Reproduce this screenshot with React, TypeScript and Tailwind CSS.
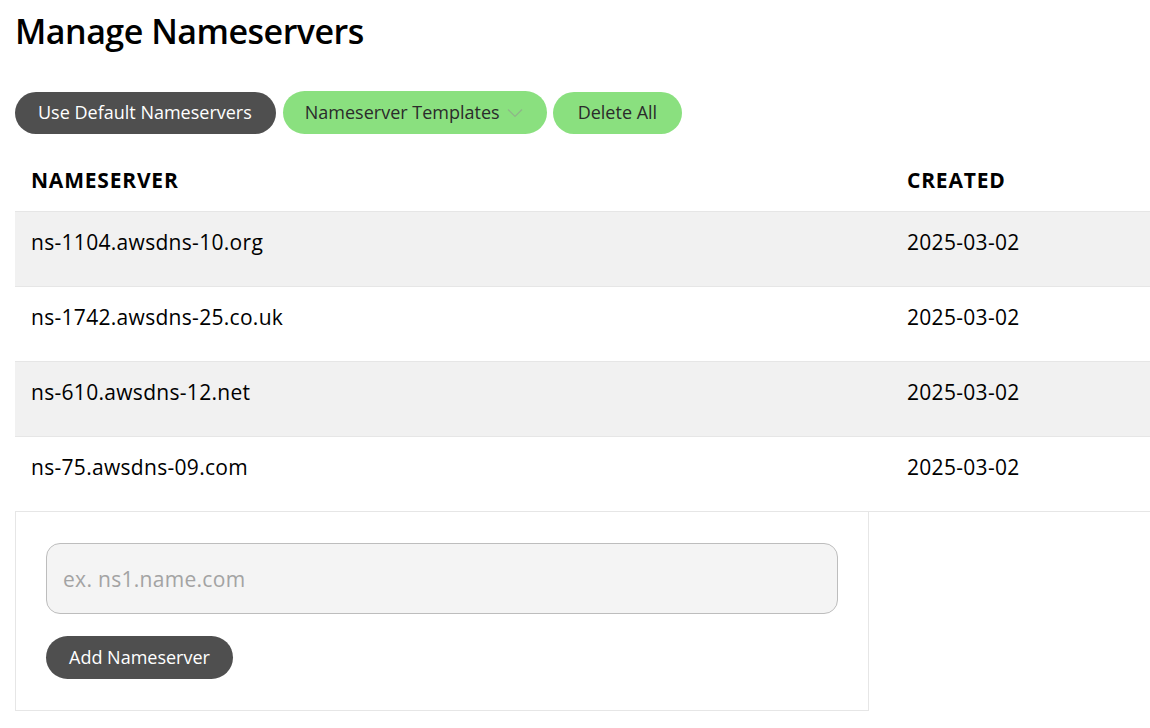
import React from "react";

const rows = [
  { ns: "ns-1104.awsdns-10.org", created: "2025-03-02" },
  { ns: "ns-1742.awsdns-25.co.uk", created: "2025-03-02" },
  { ns: "ns-610.awsdns-12.net", created: "2025-03-02" },
  { ns: "ns-75.awsdns-09.com", created: "2025-03-02" },
];

export default function App() {
  return (
    <div
      className="min-h-screen bg-white text-black pl-[15px]"
      style={{ fontFamily: "'Open Sans', Lato, sans-serif" }}
    >
      <h1 className="pt-[8px] text-[34px] leading-[46px] font-semibold tracking-[-0.5px]">
        Manage Nameservers
      </h1>
      <div className="mt-[37px] flex items-center">
        <button className="h-[42px] pl-[23px] pr-[24px] rounded-full bg-[#4f4f4f] text-white text-[18px]">
          Use Default Nameservers
        </button>
        <button className="ml-[7px] h-[43px] pl-[22px] pr-[24px] rounded-full bg-[#8ae07f] text-[#2b2b2b] text-[18px] flex items-center gap-[7px]">
          Nameserver Templates
          <svg width="16" height="10" viewBox="0 0 16 10" fill="none">
            <path d="M1 1.5L8 8.5L15 1.5" stroke="#8fb489" strokeWidth="1.2" />
          </svg>
        </button>
        <button className="ml-[6px] h-[42px] px-[25px] rounded-full bg-[#8ae07f] text-[#2b2b2b] text-[18px]">
          Delete All
        </button>
      </div>
      <div className="mt-[34px]">
        <div className="flex h-[43px] items-start text-[21px] font-bold tracking-[0.8px]">
          <div className="w-[891px] pl-[16px] -mt-[3px]">NAMESERVER</div>
          <div className="pl-[1px] -mt-[3px]">CREATED</div>
        </div>
        {rows.map((r, i) => (
          <div
            key={r.ns}
            className={`flex h-[75px] border-t border-[#e6e6e6] text-[21px] tracking-[0.3px] ${
              i % 2 === 0 ? "bg-[#f1f1f1]" : "bg-white"
            }`}
          >
            <div className="w-[891px] pl-[16px] pt-[15px]">{r.ns}</div>
            <div className="pl-[1px] pt-[15px]">{r.created}</div>
          </div>
        ))}
        <div className="border-t border-[#e6e6e6]">
          <div className="w-[854px] border-l border-r border-b border-[#e6e6e6] pl-[30px] pt-[31px] pb-[31px]">
            <input
              className="w-[792px] h-[71px] rounded-[14px] bg-[#f4f4f4] border border-[#bdbdbd] px-[16px] text-[21px] tracking-[0.3px] placeholder:text-[#a3a3a3] outline-none"
              placeholder="ex. ns1.name.com"
            />
            <button className="mt-[22px] h-[43px] px-[23px] rounded-full bg-[#4f4f4f] text-white text-[18px] block">
              Add Nameserver
            </button>
          </div>
        </div>
      </div>
    </div>
  );
}
